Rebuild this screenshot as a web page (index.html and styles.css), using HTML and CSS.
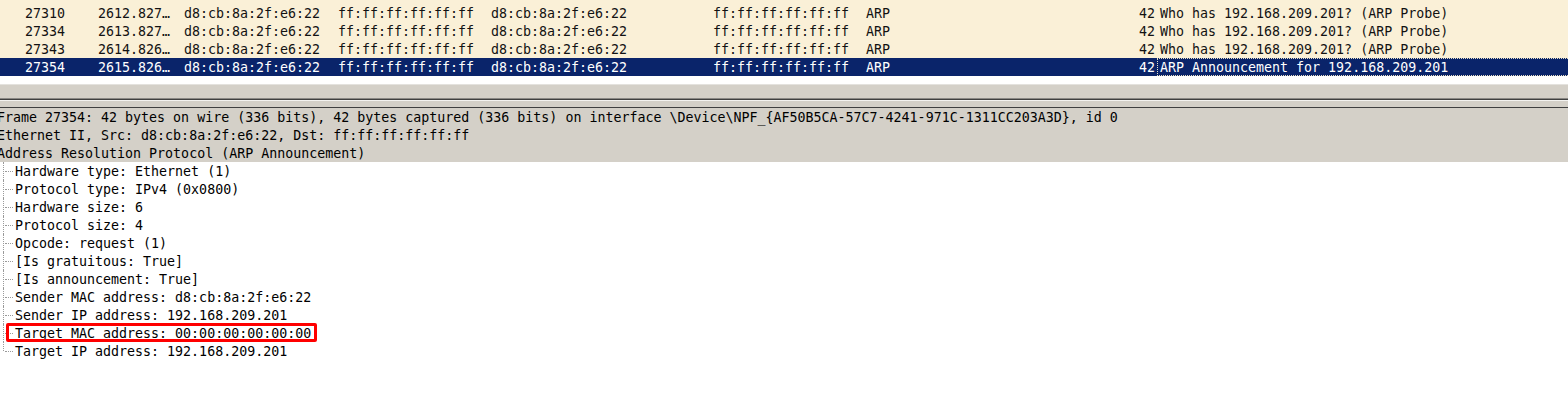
FILE: index.html
```html
<!DOCTYPE html>
<html>
<head>
<meta charset="utf-8">
<link rel="stylesheet" href="styles.css">
</head>
<body>
<div class="list">
  <div class="row row-partial"></div>
  <div class="row">
    <span class="c no">27310</span><span class="c time">2612.827…</span><span class="c src">d8:cb:8a:2f:e6:22</span><span class="c dst">ff:ff:ff:ff:ff:ff</span><span class="c hsrc">d8:cb:8a:2f:e6:22</span><span class="c hdst">ff:ff:ff:ff:ff:ff</span><span class="c proto">ARP</span><span class="c len">42</span><span class="c info">Who has 192.168.209.201? (ARP Probe)</span>
  </div>
  <div class="row">
    <span class="c no">27334</span><span class="c time">2613.827…</span><span class="c src">d8:cb:8a:2f:e6:22</span><span class="c dst">ff:ff:ff:ff:ff:ff</span><span class="c hsrc">d8:cb:8a:2f:e6:22</span><span class="c hdst">ff:ff:ff:ff:ff:ff</span><span class="c proto">ARP</span><span class="c len">42</span><span class="c info">Who has 192.168.209.201? (ARP Probe)</span>
  </div>
  <div class="row">
    <span class="c no">27343</span><span class="c time">2614.826…</span><span class="c src">d8:cb:8a:2f:e6:22</span><span class="c dst">ff:ff:ff:ff:ff:ff</span><span class="c hsrc">d8:cb:8a:2f:e6:22</span><span class="c hdst">ff:ff:ff:ff:ff:ff</span><span class="c proto">ARP</span><span class="c len">42</span><span class="c info">Who has 192.168.209.201? (ARP Probe)</span>
  </div>
  <div class="row selected">
    <span class="c no">27354</span><span class="c time">2615.826…</span><span class="c src">d8:cb:8a:2f:e6:22</span><span class="c dst">ff:ff:ff:ff:ff:ff</span><span class="c hsrc">d8:cb:8a:2f:e6:22</span><span class="c hdst">ff:ff:ff:ff:ff:ff</span><span class="c proto">ARP</span><span class="c len">42</span><span class="c info focus">ARP Announcement for 192.168.209.201</span>
  </div>
  <div class="list-empty"></div>
</div>
<div class="hscroll"></div>
<div class="splitter"></div>
<div class="details">
  <div class="hdr">Frame 27354: 42 bytes on wire (336 bits), 42 bytes captured (336 bits) on interface \Device\NPF_{AF50B5CA-57C7-4241-971C-1311CC203A3D}, id 0</div>
  <div class="hdr">Ethernet II, Src: d8:cb:8a:2f:e6:22, Dst: ff:ff:ff:ff:ff:ff</div>
  <div class="hdr">Address Resolution Protocol (ARP Announcement)</div>
  <div class="tree">
    <div class="item">Hardware type: Ethernet (1)</div>
    <div class="item">Protocol type: IPv4 (0x0800)</div>
    <div class="item">Hardware size: 6</div>
    <div class="item">Protocol size: 4</div>
    <div class="item">Opcode: request (1)</div>
    <div class="item">[Is gratuitous: True]</div>
    <div class="item">[Is announcement: True]</div>
    <div class="item">Sender MAC address: d8:cb:8a:2f:e6:22</div>
    <div class="item">Sender IP address: 192.168.209.201</div>
    <div class="item">Target MAC address: 00:00:00:00:00:00<span class="mark"></span></div>
    <div class="item">Target IP address: 192.168.209.201</div>
  </div>
</div>
</body>
</html>
```
FILE: styles.css
```css
html, body {
  margin: 0;
  padding: 0;
  background: #ffffff;
}
body {
  width: 1568px;
  height: 404px;
  overflow: hidden;
  font-family: "DejaVu Sans Mono", "Liberation Mono", monospace;
  font-size: 13.3px;
  color: #000;
}
.list {
  display: flex;
  flex-direction: column;
}
.row {
  display: flex;
  box-sizing: border-box;
  height: 18px;
  line-height: 18px;
  padding-top: 1px;
  background: #faf0d7;
  color: #121212;
  white-space: nowrap;
  overflow: hidden;
}
.row-partial {
  height: 4px;
  padding-top: 0;
}
.row.selected {
  background: #0a246a;
  color: #ffffff;
  padding-top: 0;
}
.c {
  display: block;
  box-sizing: border-box;
  overflow: hidden;
  flex: none;
}
.selected .c {
  padding-top: 1px;
}
.no { width: 90px; padding-left: 25px; }
.time { width: 90px; padding-left: 8px; }
.src { width: 154px; padding-left: 4px; }
.dst { width: 153px; padding-left: 4px; }
.hsrc { width: 222px; padding-left: 4px; }
.hdst { width: 153px; padding-left: 4px; }
.proto { width: 138px; padding-left: 4px; }
.len { width: 157px; text-align: right; padding-right: 2px; }
.info { flex: 1; padding-left: 3px; }
.selected .info.focus {
  border: 1px dotted #e8dfc6;
  border-right: none;
  height: 18px;
  line-height: 16px;
  padding-top: 1px;
  padding-left: 2px;
}
.list-empty {
  height: 8px;
  background: #ffffff;
}
.hscroll {
  height: 13px;
  background: #d4d0c8;
  border-top: 1px solid #e4e2de;
  border-bottom: 1px solid #8a8885;
}
.splitter {
  height: 7px;
  background: #d4d0c8;
  border-top: 1px solid #404040;
  box-shadow: inset 0 1px 0 #f4f3f0;
}
.details {
  border-top: 1px solid #404040;
  display: flex;
  flex-direction: column;
}
.hdr {
  box-sizing: border-box;
  height: 18px;
  line-height: 18px;
  padding-top: 1px;
  background: #d4d0c8;
  white-space: nowrap;
  text-indent: -3px;
  overflow: hidden;
}
.tree {
  display: flex;
  flex-direction: column;
  background: #ffffff;
}
.item {
  position: relative;
  box-sizing: border-box;
  height: 18px;
  line-height: 18px;
  padding-top: 1px;
  padding-left: 15px;
  white-space: nowrap;
}
.item::before {
  content: "";
  position: absolute;
  left: 3px;
  top: 0;
  bottom: 0;
  border-left: 1px dotted #9a9a9a;
}
.item:last-child::before {
  bottom: 9px;
}
.item::after {
  content: "";
  position: absolute;
  left: 5px;
  top: 9px;
  width: 8px;
  border-top: 1px dotted #9a9a9a;
}
.mark {
  position: absolute;
  left: 6px;
  top: -1px;
  width: 311px;
  height: 19px;
  box-sizing: border-box;
  border: 3px solid #ff0000;
  border-radius: 2px;
  z-index: 1;
}
```
